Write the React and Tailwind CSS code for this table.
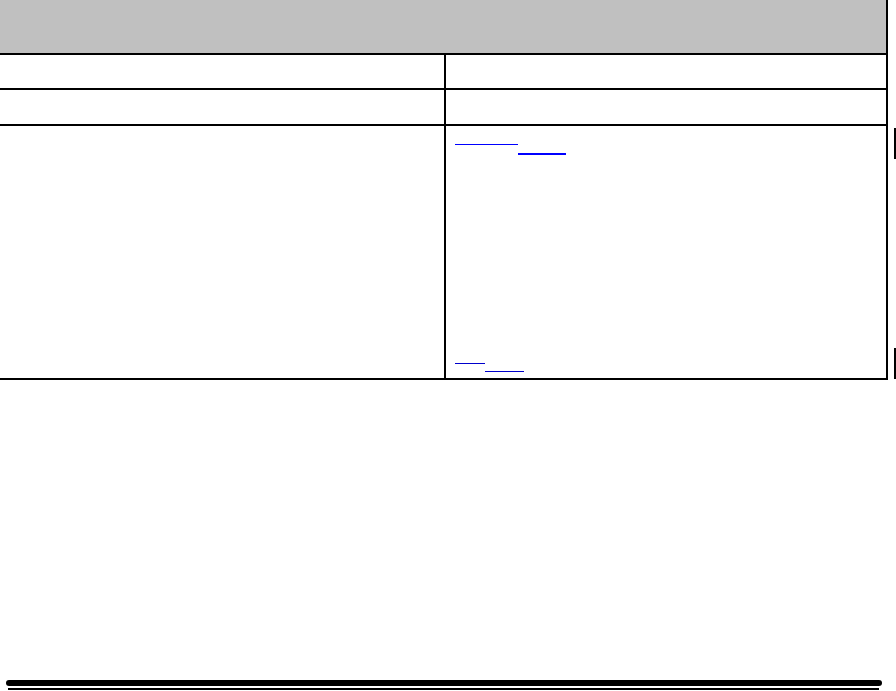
export default function App() {
  return (
    <div className="flex h-[691px] w-[896px] flex-col overflow-hidden bg-white font-['Liberation_Sans',Arial,sans-serif]">
      <div className="flex">
        {/* table */}
        <div className="flex w-[888px] flex-col">
          <div className="h-[55px] border-b-2 border-r-2 border-black bg-[#c0c0c0]" />
          <div className="flex h-[35px] border-b-2 border-black">
            <div className="w-[446px] border-r-2 border-black" />
            <div className="flex-1 border-r-2 border-black" />
          </div>
          <div className="flex h-[36px] border-b-2 border-black">
            <div className="w-[446px] border-r-2 border-black" />
            <div className="flex-1 border-r-2 border-black" />
          </div>
          <div className="flex h-[254px] border-b-2 border-black">
            <div className="w-[446px] border-r-2 border-black" />
            <div className="flex flex-1 flex-col border-r-2 border-black pl-[9px]">
              <div className="flex items-start">
                <a className="h-[19px] w-[63px] border-b border-[#0000ff]" />
                <a className="h-[29px] w-[48px] border-b-2 border-[#0000ff]" />
              </div>
              <div className="mt-auto flex items-start pb-[6px]">
                <a className="h-[24px] w-[30px] border-b border-[#0000cc]" />
                <a className="h-[32px] w-[39px] border-b border-[#0000cc]" />
              </div>
            </div>
          </div>
        </div>
        {/* edge markers */}
        <div className="ml-[6px] flex w-[2px] flex-col">
          <div className="mt-[128px] h-[31px] bg-black" />
          <div className="mt-[189px] h-[31px] bg-black" />
        </div>
      </div>

      <div className="mt-auto flex flex-col pb-[1px]">
        <div className="ml-[6px] h-[6px] w-[876px] rounded-full bg-black" />
        <div className="ml-[8px] mt-[2px] h-[2px] w-[871px] bg-black" />
      </div>
    </div>
  )
}
